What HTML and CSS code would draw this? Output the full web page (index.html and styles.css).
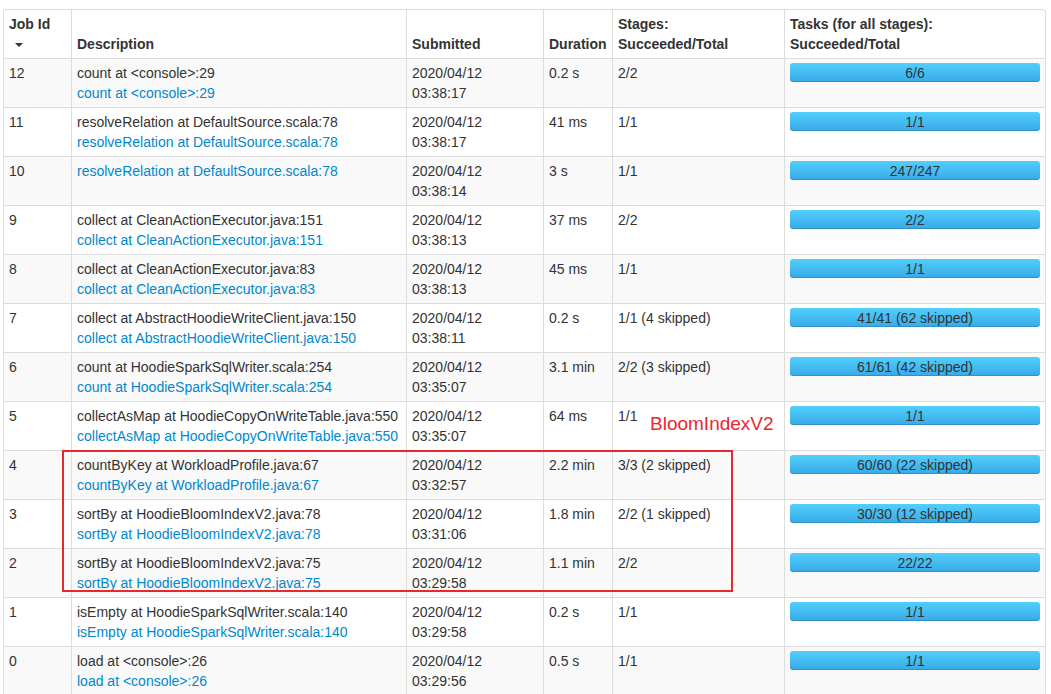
FILE: index.html
```html
<!DOCTYPE html>
<html>
<head>
<meta charset="utf-8">
<link rel="stylesheet" href="styles.css">
</head>
<body>
<table class="jobs">
  <thead>
    <tr>
      <th class="c-id">Job Id<br><span class="caret"></span></th>
      <th class="c-desc">Description</th>
      <th class="c-sub">Submitted</th>
      <th class="c-dur">Duration</th>
      <th class="c-stg">Stages:<br>Succeeded/Total</th>
      <th class="c-tsk">Tasks (for all stages):<br>Succeeded/Total</th>
    </tr>
  </thead>
  <tbody>
    <tr>
      <td>12</td>
      <td><div>count at &lt;console&gt;:29</div><a href="#">count at &lt;console&gt;:29</a></td>
      <td>2020/04/12<br>03:38:17</td>
      <td>0.2 s</td>
      <td>2/2</td>
      <td><div class="progress">6/6</div></td>
    </tr>
    <tr>
      <td>11</td>
      <td><div>resolveRelation at DefaultSource.scala:78</div><a href="#">resolveRelation at DefaultSource.scala:78</a></td>
      <td>2020/04/12<br>03:38:17</td>
      <td>41 ms</td>
      <td>1/1</td>
      <td><div class="progress">1/1</div></td>
    </tr>
    <tr>
      <td>10</td>
      <td><a href="#">resolveRelation at DefaultSource.scala:78</a></td>
      <td>2020/04/12<br>03:38:14</td>
      <td>3 s</td>
      <td>1/1</td>
      <td><div class="progress">247/247</div></td>
    </tr>
    <tr>
      <td>9</td>
      <td><div>collect at CleanActionExecutor.java:151</div><a href="#">collect at CleanActionExecutor.java:151</a></td>
      <td>2020/04/12<br>03:38:13</td>
      <td>37 ms</td>
      <td>2/2</td>
      <td><div class="progress">2/2</div></td>
    </tr>
    <tr>
      <td>8</td>
      <td><div>collect at CleanActionExecutor.java:83</div><a href="#">collect at CleanActionExecutor.java:83</a></td>
      <td>2020/04/12<br>03:38:13</td>
      <td>45 ms</td>
      <td>1/1</td>
      <td><div class="progress">1/1</div></td>
    </tr>
    <tr>
      <td>7</td>
      <td><div>collect at AbstractHoodieWriteClient.java:150</div><a href="#">collect at AbstractHoodieWriteClient.java:150</a></td>
      <td>2020/04/12<br>03:38:11</td>
      <td>0.2 s</td>
      <td>1/1 (4 skipped)</td>
      <td><div class="progress">41/41 (62 skipped)</div></td>
    </tr>
    <tr>
      <td>6</td>
      <td><div>count at HoodieSparkSqlWriter.scala:254</div><a href="#">count at HoodieSparkSqlWriter.scala:254</a></td>
      <td>2020/04/12<br>03:35:07</td>
      <td>3.1 min</td>
      <td>2/2 (3 skipped)</td>
      <td><div class="progress">61/61 (42 skipped)</div></td>
    </tr>
    <tr>
      <td>5</td>
      <td><div>collectAsMap at HoodieCopyOnWriteTable.java:550</div><a href="#">collectAsMap at HoodieCopyOnWriteTable.java:550</a></td>
      <td>2020/04/12<br>03:35:07</td>
      <td>64 ms</td>
      <td>1/1</td>
      <td><div class="progress">1/1</div></td>
    </tr>
    <tr>
      <td>4</td>
      <td><div>countByKey at WorkloadProfile.java:67</div><a href="#">countByKey at WorkloadProfile.java:67</a></td>
      <td>2020/04/12<br>03:32:57</td>
      <td>2.2 min</td>
      <td>3/3 (2 skipped)</td>
      <td><div class="progress">60/60 (22 skipped)</div></td>
    </tr>
    <tr>
      <td>3</td>
      <td><div>sortBy at HoodieBloomIndexV2.java:78</div><a href="#">sortBy at HoodieBloomIndexV2.java:78</a></td>
      <td>2020/04/12<br>03:31:06</td>
      <td>1.8 min</td>
      <td>2/2 (1 skipped)</td>
      <td><div class="progress">30/30 (12 skipped)</div></td>
    </tr>
    <tr>
      <td>2</td>
      <td><div>sortBy at HoodieBloomIndexV2.java:75</div><a href="#">sortBy at HoodieBloomIndexV2.java:75</a></td>
      <td>2020/04/12<br>03:29:58</td>
      <td>1.1 min</td>
      <td>2/2</td>
      <td><div class="progress">22/22</div></td>
    </tr>
    <tr>
      <td>1</td>
      <td><div>isEmpty at HoodieSparkSqlWriter.scala:140</div><a href="#">isEmpty at HoodieSparkSqlWriter.scala:140</a></td>
      <td>2020/04/12<br>03:29:58</td>
      <td>0.2 s</td>
      <td>1/1</td>
      <td><div class="progress">1/1</div></td>
    </tr>
    <tr>
      <td>0</td>
      <td><div>load at &lt;console&gt;:26</div><a href="#">load at &lt;console&gt;:26</a></td>
      <td>2020/04/12<br>03:29:56</td>
      <td>0.5 s</td>
      <td>1/1</td>
      <td><div class="progress">1/1</div></td>
    </tr>
  </tbody>
</table>
<div class="note-box"></div>
<div class="note-label">BloomIndexV2</div>
</body>
</html>
```

FILE: styles.css
```css
html, body {
  margin: 0;
  background: #fff;
}
body {
  padding: 9px 0 0 3px;
  font-family: "Liberation Sans", Arial, sans-serif;
  font-size: 14px;
  line-height: 20px;
  color: #333;
}
.jobs {
  table-layout: fixed;
  width: 1043px;
  border-collapse: separate;
  border-spacing: 0;
  border: 1px solid #ddd;
  border-left: 0;
  border-radius: 4px;
}
.jobs th, .jobs td {
  box-sizing: border-box;
  padding: 4px 5px;
  border-left: 1px solid #ddd;
  text-align: left;
  vertical-align: top;
}
.jobs td {
  border-top: 1px solid #ddd;
}
.jobs th {
  font-weight: bold;
  vertical-align: bottom;
}
.c-id { width: 68px; }
.c-desc { width: 335px; }
.c-sub { width: 137px; }
.c-dur { width: 69px; }
.c-stg { width: 172px; }
.c-tsk { width: 261px; }
.jobs tbody tr:nth-child(odd) td {
  background: #f9f9f9;
}
.jobs a {
  color: #0088cc;
  text-decoration: none;
}
.caret {
  display: inline-block;
  width: 0;
  height: 0;
  margin-left: 6px;
  vertical-align: middle;
  border-left: 4px solid transparent;
  border-right: 4px solid transparent;
  border-top: 4px solid #333;
}
.progress {
  height: 19px;
  line-height: 20px;
  border-radius: 3px;
  text-align: center;
  font-size: 14px;
  color: #333;
  background: linear-gradient(to bottom, #52cffd, #38aae7);
  box-shadow: inset 0 -1px 0 rgba(0, 0, 0, 0.15);
}
.note-box {
  position: absolute;
  left: 62px;
  top: 450px;
  width: 667px;
  height: 138px;
  border: 2px solid #e8282d;
}
.note-label {
  position: absolute;
  left: 650px;
  top: 413px;
  font-family: "Liberation Sans", Arial, sans-serif;
  font-size: 19px;
  line-height: 22px;
  color: #e8282d;
}
```
